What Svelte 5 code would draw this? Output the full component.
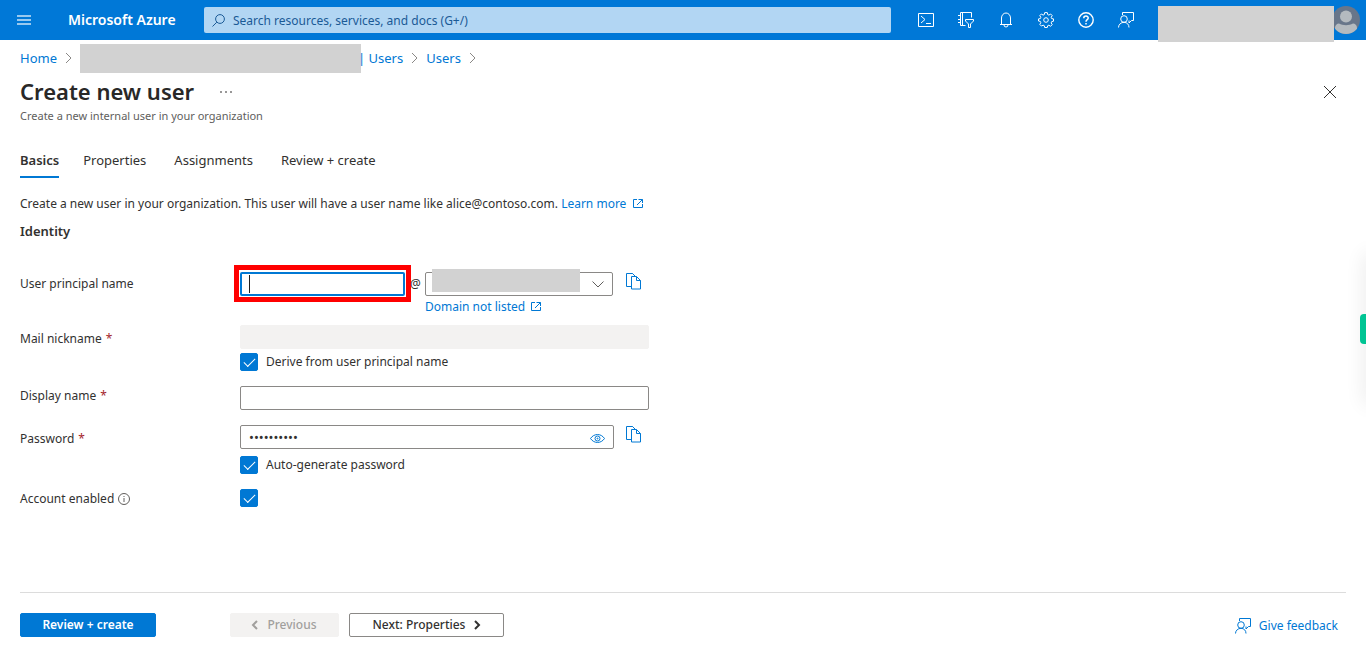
<script lang="ts">
  const tabs = ['Basics', 'Properties', 'Assignments', 'Review + create'];

  let activeTab = $state('Basics');
  let principalName = $state('');
  let displayName = $state('');
  let password = $state('Xk3vTq9wLp');
  let showPassword = $state(false);
  let deriveNickname = $state(true);
  let autoPassword = $state(true);
  let accountEnabled = $state(true);
</script>

{#snippet chevron()}
  <svg class="crumb-sep" width="7" height="12" viewBox="0 0 7 12" aria-hidden="true">
    <path d="M1 1l5 5-5 5" />
  </svg>
{/snippet}

{#snippet external()}
  <svg class="external" width="10" height="10" viewBox="0 0 10 10" aria-hidden="true">
    <path d="M4 .5H.5v8h9V5M5.500.5h4V4M9.500.5L4 6" />
  </svg>
{/snippet}

{#snippet copy()}
  <svg width="16" height="17" viewBox="0 0 16 17" aria-hidden="true">
    <path d="M5 13.500H.5V.5h6l3 3M6.500.5l3 3M5.500 3.500h5l4 4v8.500h-9zM10.500 3.500v4h4" />
  </svg>
{/snippet}

{#snippet feedback()}
  <svg width="16" height="16" viewBox="0 0 16 16" aria-hidden="true">
    <path d="M4.500 3V.5h11v8h-2l-2.500 2.500V8.500" />
    <circle cx="6" cy="7" r="3.300" />
    <path d="M.5 15.500c0-3 2.500-5.200 5.500-5.200s5 2.200 5 5.200" />
  </svg>
{/snippet}

<div class="page">
  <header class="topbar">
    <button class="menu" aria-label="Show portal menu">
      <svg width="14" height="10" viewBox="0 0 14 10" aria-hidden="true">
        <path d="M0 1h14M0 5h14M0 9h14" />
      </svg>
    </button>
    <a class="brand" href="#home">Microsoft Azure</a>
    <div class="search">
      <svg width="13" height="13" viewBox="0 0 13 13" aria-hidden="true">
        <circle cx="8" cy="5" r="4.400" />
        <path d="M4.800 8.200L.5 12.500" />
      </svg>
      <input type="text" aria-label="Search" placeholder="Search resources, services, and docs (G+/)" />
    </div>
    <nav class="tools" aria-label="Portal tools">
      <button aria-label="Cloud Shell">
        <svg width="16" height="14" viewBox="0 0 16 14" aria-hidden="true">
          <path d="M.5.5h15v13H.5zM3 3l4 3.500L3 10M8 10.500h5" />
        </svg>
      </button>
      <button aria-label="Directories and subscriptions">
        <svg width="16" height="16" viewBox="0 0 16 16" aria-hidden="true">
          <path d="M7.500 13.500h-5V.5h11v5M4.500.5v13M0 3.500h2.500M0 7.500h2.500M0 10.500h2.500" />
          <path d="M7.500 7.500h8v1.500l-3 3v3.500h-2V12l-3-3z" />
        </svg>
      </button>
      <button aria-label="Notifications">
        <svg width="14" height="16" viewBox="0 0 14 16" aria-hidden="true">
          <path d="M1 12.500h12M2.500 12.500V6a4.500 5 0 0 1 9 0v6.500M5 13a2 2 0 0 0 4 0" />
        </svg>
      </button>
      <button aria-label="Settings">
        <svg width="16" height="16" viewBox="0 0 16 16" aria-hidden="true">
          <path d="M6.700.6h2.600l.4 2 1.200.5L12.600 2l1.600 1.600-1 1.700.5 1.300 1.800.3v2.300l-1.800.4-.5 1.300 1 1.700-1.600 1.700-1.700-1.100-1.200.5-.4 1.800H6.700l-.4-1.800-1.200-.5L3.400 14l-1.600-1.600 1-1.700-.5-1.300-1.800-.4V6.900l1.800-.3.5-1.300-1-1.700L3.400 2l1.700 1.100 1.200-.5z" />
          <circle cx="8" cy="8" r="2.300" />
        </svg>
      </button>
      <button aria-label="Help">
        <svg width="16" height="16" viewBox="0 0 16 16" aria-hidden="true">
          <circle cx="8" cy="8" r="7.200" stroke-width="1.400" />
          <path d="M5.800 6.200C5.800 3.300 10.300 3.500 10.200 6c0 1.700-2.200 1.700-2.200 3.700M8 11v1.500" stroke-width="1.500" />
        </svg>
      </button>
      <button aria-label="Feedback">{@render feedback()}</button>
    </nav>
    <div class="account-name"></div>
    <button class="avatar" aria-label="Account">
      <svg width="26" height="28" viewBox="0 0 26 28" aria-hidden="true">
        <clipPath id="disc"><circle cx="12" cy="14" r="14" /></clipPath>
        <g clip-path="url(#disc)">
          <rect width="26" height="28" fill="#68768a" />
          <circle cx="12" cy="10.500" r="6" fill="#b4babf" />
          <path d="M1 28v-6c0-3 2-4.500 4-4.500 4 2.200 10 2.200 14 0 2 0 4 1.500 4 4.500v6z" fill="#b4babf" />
        </g>
      </svg>
    </button>
  </header>

  <nav class="crumbs" aria-label="Breadcrumb">
    <a href="#home">Home</a>
    {@render chevron()}
    <a class="tenant" href="#tenant"><span class="redacted"></span>| Users</a>
    {@render chevron()}
    <a href="#users">Users</a>
    {@render chevron()}
  </nav>

  <div class="heading">
    <h1>Create new user</h1>
    <button class="more" aria-label="More">
      <svg width="12" height="2" viewBox="0 0 12 2" aria-hidden="true">
        <path d="M0 1h2M5 1h2M10 1h2" />
      </svg>
    </button>
    <button class="close" aria-label="Close">
      <svg width="12" height="12" viewBox="0 0 12 12" aria-hidden="true">
        <path d="M0 0l12 12M12 0L0 12" />
      </svg>
    </button>
  </div>
  <p class="subtitle">Create a new internal user in your organization</p>

  <div class="tabs" role="tablist">
    {#each tabs as tab}
      <button role="tab" aria-selected={activeTab === tab} class:active={activeTab === tab} onclick={() => (activeTab = tab)}>
        {tab}
      </button>
    {/each}
  </div>

  <main>
    <p class="intro">
      Create a new user in your organization. This user will have a user name like alice@contoso.com.
      <a href="#learn">Learn more {@render external()}</a>
    </p>
    <h2>Identity</h2>

    <form id="create-user" onsubmit={(e) => e.preventDefault()}>
      <div class="row upn">
        <label for="upn">User principal name</label>
        <div class="control">
          <div class="name-box">
            <input id="upn" type="text" bind:value={principalName} />
            <span class="caret"></span>
            <span class="highlight"></span>
          </div>
          <span class="at">@</span>
          <div class="domain">
            <div class="select-box">
              <select aria-label="Domain"><option></option></select>
              <span class="redacted"></span>
              <svg width="12" height="7" viewBox="0 0 12 7" aria-hidden="true">
                <path d="M.5.5L6 6 11.500.5" />
              </svg>
            </div>
            <a href="#domains">Domain not listed {@render external()}</a>
          </div>
          <button type="button" class="copy" aria-label="Copy user principal name">{@render copy()}</button>
        </div>
      </div>

      <div class="row nickname">
        <label for="nickname">Mail nickname <span class="req">*</span></label>
        <div class="control stack">
          <input id="nickname" type="text" disabled={deriveNickname} />
          <label class="check"><input type="checkbox" bind:checked={deriveNickname} />Derive from user principal name</label>
        </div>
      </div>

      <div class="row display">
        <label for="display">Display name <span class="req">*</span></label>
        <div class="control">
          <input id="display" type="text" bind:value={displayName} />
        </div>
      </div>

      <div class="row password">
        <label for="password">Password <span class="req">*</span></label>
        <div class="control stack">
          <div class="line">
            <div class="pass-box">
              <input id="password" type={showPassword ? 'text' : 'password'} bind:value={password} />
              <button type="button" class="eye" aria-label="Show password" onclick={() => (showPassword = !showPassword)}>
                <svg width="15" height="9" viewBox="0 0 15 9" aria-hidden="true">
                  <path d="M.5 4.500C4-.8 11-.8 14.500 4.500 11 9.800 4 9.800.5 4.500z" />
                  <circle cx="7.500" cy="4.500" r="2.500" />
                  <circle cx="7.500" cy="4.500" r=".5" />
                </svg>
              </button>
            </div>
            <button type="button" class="copy" aria-label="Copy password">{@render copy()}</button>
          </div>
          <label class="check"><input type="checkbox" bind:checked={autoPassword} />Auto-generate password</label>
        </div>
      </div>

      <div class="row enabled">
        <label for="enabled">
          Account enabled
          <svg class="info" width="12" height="12" viewBox="0 0 12 12" aria-hidden="true">
            <circle cx="6" cy="6" r="5.500" />
            <path d="M6 5v4M6 3v1" />
          </svg>
        </label>
        <div class="control">
          <input id="enabled" type="checkbox" bind:checked={accountEnabled} />
        </div>
      </div>
    </form>
  </main>

  <footer>
    <button class="btn primary" form="create-user">Review + create</button>
    <button class="btn previous" disabled>
      <svg width="6" height="8" viewBox="0 0 6 8" aria-hidden="true"><path d="M5 0L1 4l4 4" /></svg>
      Previous
    </button>
    <button class="btn next">
      Next: Properties
      <svg width="6" height="8" viewBox="0 0 6 8" aria-hidden="true"><path d="M1 0l4 4-4 4" /></svg>
    </button>
    <a class="feedback" href="#feedback">{@render feedback()} Give feedback</a>
  </footer>

  <div class="side-handle"></div>
</div>

<style>
  :global(body) { margin: 0; }

  .page {
    position: relative;
    display: flex;
    flex-direction: column;
    min-height: 100vh;
    overflow: hidden;
    background: #fff;
    color: #323130;
    font: 12px/20px "Segoe UI", "Noto Sans", sans-serif;
  }
  .page * { box-sizing: border-box; }
  button, input, select { font: inherit; color: inherit; }
  button { padding: 0; border: 0; background: none; cursor: pointer; }
  svg { display: block; flex: none; overflow: visible; fill: none; stroke: currentColor; }
  a { color: #0078d4; text-decoration: none; }
  h1, h2, p { margin: 0; }

  /* Top bar */
  .topbar { display: flex; align-items: center; height: 40px; background: #0078d7; color: #fff; }
  .menu { display: flex; width: 48px; padding-left: 17px; opacity: 0.6; }
  .menu svg { stroke-width: 2; }
  .brand { width: 136px; margin-left: 20px; color: #fff; font-size: 14px; font-weight: 600; white-space: nowrap; }
  .search {
    display: flex; flex: 1; align-items: center; gap: 8px; height: 26px; padding: 0 8px;
    border-radius: 2px; background: #b2d6f3; color: #1a5a96;
  }
  .search input { flex: 1; min-width: 0; }
  .search input::placeholder { color: #1a5a96; opacity: 1; }
  .tools { display: flex; margin-left: 15px; }
  .tools button { display: flex; align-items: center; justify-content: center; width: 40px; height: 40px; }
  .account-name { z-index: 1; align-self: flex-start; width: 176px; height: 36px; margin: 6px 0 -2px 12px; background: #d2d2d2; }
  .avatar { margin-right: 6px; }
  .avatar svg { stroke: none; overflow: hidden; }

  /* Breadcrumb and title */
  .crumbs { display: flex; align-items: center; gap: 8px; height: 36px; padding: 0 20px; font-size: 13px; }
  .crumb-sep { stroke: #8a8886; }
  .tenant { display: flex; align-items: center; }
  .redacted { background: #d2d2d2; }
  .tenant .redacted { width: 281px; height: 29px; margin-right: -3px; }
  .heading { display: flex; align-items: center; height: 32px; padding: 0 30px 0 20px; }
  h1 { padding-bottom: 2px; color: #292827; font-size: 22px; font-weight: 600; line-height: 30px; }
  .more { margin-left: 26px; }
  .close { margin-left: auto; }
  .subtitle { padding: 0 20px; color: #605e5c; font-size: 11px; line-height: 16px; }

  .tabs { display: flex; gap: 24px; margin-top: 20px; padding: 0 20px; font-size: 13px; }
  .tabs button { height: 34px; padding-right: 4px; border-bottom: 2px solid transparent; }
  .tabs .active { padding-right: 0; border-color: #0078d4; font-weight: 600; }

  /* Form */
  main { flex: 1; padding: 15px 20px; }
  .intro { line-height: 22px; }
  .external { display: inline-block; margin-left: 3px; vertical-align: -1px; }
  h2 { margin-top: 6px; font-size: 13px; font-weight: 600; line-height: 20px; }
  form { margin-top: 31px; }
  .row { display: flex; align-items: flex-start; }
  .row > label { display: flex; align-items: center; gap: 4px; width: 220px; padding-top: 2px; }
  .req { color: #a4262c; }
  .control { display: flex; align-items: flex-start; width: 409px; }
  .stack { flex-direction: column; gap: 4px; }
  .nickname { margin-top: 8px; }
  .display { margin-top: 15px; }
  .password { margin-top: 15px; }
  .enabled { margin-top: 15px; }
  .display > label, .enabled > label { padding-top: 0; }
  .nickname > label, .password > label { padding-top: 4px; }
  .password .stack { gap: 7px; }

  input[type="text"], input[type="password"], select {
    display: block; width: 100%; height: 24px; padding: 0 8px;
    border: 1px solid #8a8886; border-radius: 2px; background: #fff; outline: 0;
  }
  input[type="password"] { font-size: 13px; }
  .search input[type="text"] { padding: 0; border: 0; background: none; }
  input:disabled { border-color: #f3f2f1; background: #f3f2f1; }
  select { appearance: none; }

  .name-box { position: relative; width: 165px; }
  .name-box input[type="text"] { border: 2px solid #0078d4; }
  .caret { position: absolute; top: 3px; left: 9px; width: 1px; height: 18px; background: #201f1e; }
  .highlight { position: absolute; inset: -7px -6px -6px; border: 5px solid #f00; pointer-events: none; }
  .at { width: 20px; padding: 2px 0 0 5px; }
  .domain { width: 188px; }
  .domain a { display: block; white-space: nowrap; line-height: 21px; }
  .select-box { position: relative; }
  .select-box .redacted { position: absolute; top: -3px; left: 7px; width: 148px; height: 23px; }
  .select-box svg { position: absolute; top: 9px; right: 9px; stroke: #605e5c; pointer-events: none; }
  .copy { flex: none; align-self: flex-start; margin: 1px 0 0 13px; color: #0078d4; }

  .line { display: flex; height: 24px; }
  .pass-box { position: relative; width: 374px; }
  .eye { position: absolute; top: 9px; right: 9px; color: #0078d4; }
  .line .copy { margin-left: 12px; }

  .check { display: flex; align-items: center; gap: 8px; height: 18px; }
  input[type="checkbox"] {
    position: relative; width: 18px; height: 18px; margin: 0; appearance: none;
    border: 1px solid #323130; border-radius: 2px;
  }
  input[type="checkbox"]:checked { border-color: #0078d4; background: #0078d4; }
  input[type="checkbox"]:checked::after {
    content: ""; position: absolute; top: 4px; left: 3px; width: 10px; height: 5px;
    border: solid #fff; border-width: 0 0 1px 1px; transform: rotate(-45deg);
  }
  .info { stroke: #605e5c; }

  /* Footer */
  footer { display: flex; align-items: center; height: 65px; margin: 0 20px; border-top: 1px solid #dcdcdc; }
  .btn {
    display: flex; align-items: center; justify-content: center; gap: 9px; height: 24px;
    border: 1px solid #8a8886; border-radius: 2px; line-height: 18px; white-space: nowrap;
  }
  .btn svg { stroke-width: 2; }
  .primary { width: 136px; border-color: #0078d4; background: #0078d4; color: #fff; font-weight: 600; }
  .previous { width: 109px; margin-left: 74px; border-color: #f3f2f1; background: #f3f2f1; color: #a19f9d; font-weight: 500; }
  .next { width: 155px; margin-left: 10px; font-weight: 500; }
  .feedback { display: flex; align-items: center; gap: 8px; margin: 2px 8px 0 auto; }

  .side-handle {
    position: absolute; top: 314px; right: 0; width: 6px; height: 30px;
    border-radius: 4px 0 0 4px; background: #0c9;
  }
  /* soft shadow of the collapsed panel behind the handle */
  .side-handle::before {
    content: ""; position: absolute; top: -60px; bottom: -60px; left: 6px; width: 10px;
    box-shadow: 0 0 20px rgba(0, 0, 0, 0.12);
  }
</style>
